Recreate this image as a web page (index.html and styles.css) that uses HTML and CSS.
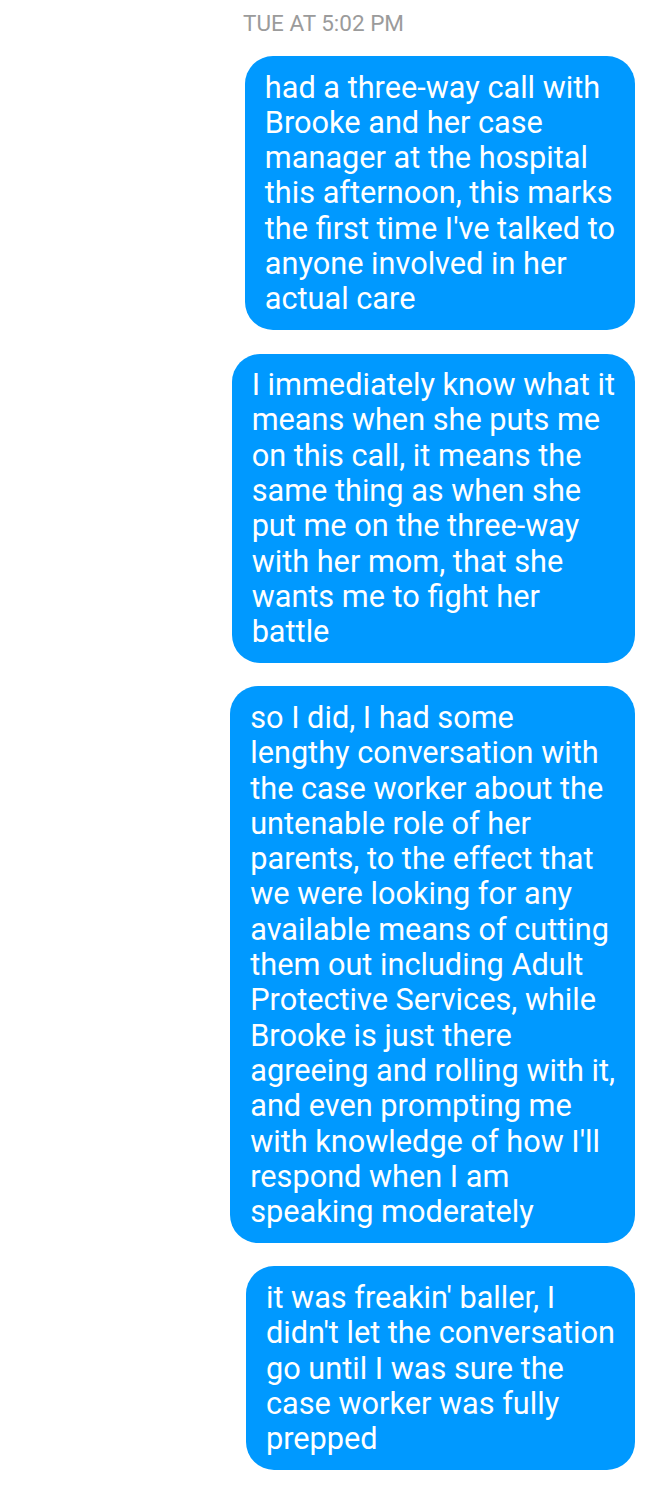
FILE: index.html
```html
<!DOCTYPE html>
<html>
<head>
<meta charset="utf-8">
<link rel="stylesheet" href="styles.css">
</head>
<body>
<div class="thread">
  <div class="stamp">TUE AT 5:02 PM</div>
  <div class="msg b1">had a three-way call with<br>Brooke and her case<br>manager at the hospital<br>this afternoon, this marks<br>the first time I've talked to<br>anyone involved in her<br>actual care</div>
  <div class="msg b2">I immediately know what it<br>means when she puts me<br>on this call, it means the<br>same thing as when she<br>put me on the three-way<br>with her mom, that she<br>wants me to fight her<br>battle</div>
  <div class="msg b3">so I did, I had some<br>lengthy conversation with<br>the case worker about the<br>untenable role of her<br>parents, to the effect that<br>we were looking for any<br>available means of cutting<br>them out including Adult<br>Protective Services, while<br>Brooke is just there<br>agreeing and rolling with it,<br>and even prompting me<br>with knowledge of how I'll<br>respond when I am<br>speaking moderately</div>
  <div class="msg b4">it was freakin' baller, I<br>didn't let the conversation<br>go until I was sure the<br>case worker was fully<br>prepped</div>
</div>
</body>
</html>
```

FILE: styles.css
```css
html, body {
  margin: 0;
  padding: 0;
  background: #ffffff;
}
.thread {
  display: flex;
  flex-direction: column;
  align-items: flex-end;
  padding: 10px 13px 16px 0;
  font-family: Roboto, "Noto Sans", sans-serif;
}
.stamp {
  align-self: flex-start;
  margin-left: 243px;
  font-size: 22.5px;
  line-height: 26px;
  color: #9b9b9b;
  margin-bottom: 20px;
}
.msg {
  background: #0099ff;
  color: #ffffff;
  font-size: 30.7px;
  line-height: 35.3px;
  padding: 13.5px 20px;
  border-radius: 28px;
  white-space: nowrap;
  margin-bottom: 23.5px;
}
```
